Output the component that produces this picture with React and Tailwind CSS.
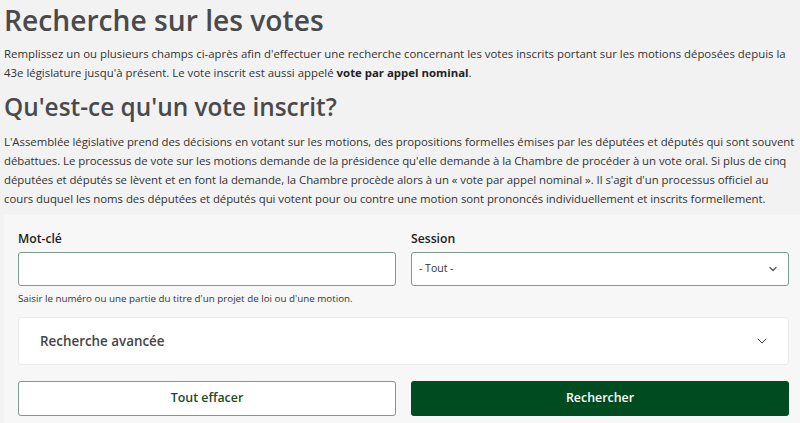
import { ChevronDown } from "lucide-react";

const font = { fontFamily: "'Open Sans', 'Noto Sans', sans-serif" };

export default function App() {
  return (
    <div className="min-h-[423px] w-[800px] overflow-hidden bg-[#f2f2f2] text-[#333]" style={font}>
      <div className="pl-[4px]">
        <h1 className="pt-[1px] text-[28.2px] font-semibold leading-[38px] text-[#4a4a4a]">
          Recherche sur les votes
        </h1>
        <p className="mt-[5px] text-[11.4px] leading-[19px] text-[#333]">
          Remplissez un ou plusieurs champs ci-après afin d'effectuer une recherche concernant les votes inscrits portant sur les motions déposées depuis la 43e législature jusqu'à présent. Le vote inscrit est aussi appelé{" "}
          <strong className="font-bold text-[#222]">vote par appel nominal</strong>.
        </p>
        <h2 className="mt-[8px] text-[24.4px] font-semibold leading-[34px] text-[#4a4a4a]">
          Qu'est-ce qu'un vote inscrit?
        </h2>
        <p className="mt-[8px] text-[11.4px] leading-[19px] tracking-[-0.045px] text-[#333]">
          L'Assemblée législative prend des décisions en votant sur les motions, des propositions formelles émises par les députées et députés qui sont souvent débattues. Le processus de vote sur les motions demande de la présidence qu'elle demande à la Chambre de procéder à un vote oral. Si plus de cinq députées et députés se lèvent et en font la demande, la Chambre procède alors à un « vote par appel nominal ». Il s'agit d'un processus officiel au cours duquel les noms des députées et députés qui votent pour ou contre une motion sont prononcés individuellement et inscrits formellement.
        </p>
      </div>

      <div className="ml-[4px] mt-[7px] bg-[#f7f7f7] pb-[10px] pl-[14px] pr-[11px] pt-[15px]">
        <div className="grid grid-cols-2 gap-x-[15px]">
          <div>
            <label className="block text-[12.2px] font-semibold leading-[18px] text-[#222]">Mot-clé</label>
            <input
              type="text"
              className="mt-[4px] block h-[34px] w-full rounded-[3px] border border-[#7d9a8d] bg-white px-2 text-[12px] outline-none"
            />
            <p className="mt-[5px] text-[9.8px] leading-[15px] text-[#333]">
              Saisir le numéro ou une partie du titre d'un projet de loi ou d'une motion.
            </p>
          </div>
          <div>
            <label className="block text-[12.2px] font-semibold leading-[18px] text-[#222]">Session</label>
            <div className="mt-[4px] flex h-[34px] w-full items-center justify-between rounded-[3px] border border-[#7d9a8d] bg-white pl-[7px] pr-[9px]">
              <span className="text-[10.5px] text-[#333]">- Tout -</span>
              <ChevronDown size={12} strokeWidth={2.5} className="text-[#555]" />
            </div>
          </div>
        </div>

        <div className="mt-[11px] flex h-[48px] items-center justify-between rounded-[3px] border border-[#ebebeb] bg-white pl-[21px] pr-[18px]">
          <span className="text-[13.4px] font-semibold text-[#444]">Recherche avancée</span>
          <ChevronDown size={16} strokeWidth={1.5} className="text-[#444]" />
        </div>

        <div className="mt-[16px] grid grid-cols-2 gap-x-[15px]">
          <button className="h-[35px] rounded-[3px] border border-[#7d9a8d] bg-white text-[12.4px] font-semibold text-[#1d4a2b]">
            Tout effacer
          </button>
          <button className="h-[35px] rounded-[3px] bg-[#004b20] text-[12.4px] font-semibold text-white">
            Rechercher
          </button>
        </div>
      </div>
    </div>
  );
}
